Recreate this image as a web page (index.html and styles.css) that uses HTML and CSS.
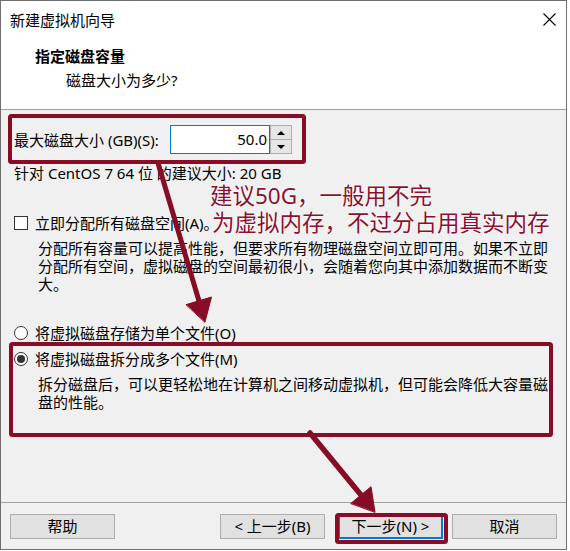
FILE: index.html
```html
<!DOCTYPE html>
<html lang="zh-CN">
<head>
<meta charset="utf-8">
<title>新建虚拟机向导</title>
<link rel="stylesheet" href="styles.css">
</head>
<body>
<div class="window">
  <div class="top">
    <div class="titlebar">
      <span class="title">新建虚拟机向导</span>
      <svg class="close" width="13" height="13" viewBox="0 0 13 13"><path d="M0.5 0.5 L12.5 12.5 M12.5 0.5 L0.5 12.5" stroke="#000" stroke-width="1.1" fill="none"/></svg>
    </div>
    <div class="header">
      <div class="h1">指定磁盘容量</div>
      <div class="sub">磁盘大小为多少?</div>
    </div>
  </div>
  <div class="body">
    <div class="size-row">
      <span class="label">最大磁盘大小 (GB)(S):</span>
      <div class="spin">
        <div class="field">50.0</div>
        <div class="arrows">
          <div class="ab"><span class="tri up"></span></div>
          <div class="ab"><span class="tri down"></span></div>
        </div>
      </div>
    </div>
    <div class="rec">针对 CentOS 7 64 位 的建议大小: 20 GB</div>
    <div class="opt check-row"><span class="checkbox"></span><span>立即分配所有磁盘空间(A)。</span></div>
    <p class="desc">分配所有容量可以提高性能，但要求所有物理磁盘空间立即可用。如果不立即分配所有空间，虚拟磁盘的空间最初很小，会随着您向其中添加数据而不断变大。</p>
    <div class="opt r1"><span class="radio"></span><span>将虚拟磁盘存储为单个文件(O)</span></div>
    <div class="opt r2"><span class="radio on"></span><span>将虚拟磁盘拆分成多个文件(M)</span></div>
    <p class="desc">拆分磁盘后，可以更轻松地在计算机之间移动虚拟机，但可能会降低大容量磁盘的性能。</p>
  </div>
  <div class="footer">
    <button class="btn">帮助</button>
    <span class="fill"></span>
    <button class="btn back">&lt; 上一步(B)</button>
    <button class="btn next">下一步(N) &gt;</button>
    <button class="btn">取消</button>
  </div>
</div>

<svg class="marks" width="570" height="551" viewBox="0 0 570 551">
  <g fill="none" stroke="#870c25" stroke-width="4">
    <rect x="10" y="116" width="294" height="46" rx="1.5"/>
    <rect x="11" y="344" width="540" height="91" rx="1.5"/>
    <rect x="337" y="515" width="109" height="27" rx="1.5"/>
  </g>
  <g stroke="#870c25" stroke-linecap="round" fill="#870c25">
    <line x1="158" y1="163" x2="199" y2="301" stroke-width="5"/>
    <polygon points="205,322 211.5,297 186.3,304.6" stroke-width="1"/>
    <line x1="310" y1="433" x2="361" y2="495" stroke-width="5.5"/>
    <polygon points="375,512 371,486.7 351,503.3" stroke-width="1"/>
  </g>
</svg>
<div class="note">
  <div class="n1">建议50G，一般用不完</div>
  <div class="n2">为虚拟内存，不过分占用真实内存</div>
</div>
</body>
</html>
```
FILE: styles.css
```css
* {
  box-sizing: border-box;
  margin: 0;
  padding: 0;
}

html, body {
  width: 570px;
  height: 551px;
  background: #ffffff;
  overflow: hidden;
}

body {
  position: relative;
  font-family: "Noto Sans", "Noto Sans CJK SC", sans-serif;
  font-size: 15px;
  color: #000;
}

.window {
  width: 567px;
  height: 550px;
  border: 1px solid #6f6f6f;
  background: #f0f0f0;
  display: flex;
  flex-direction: column;
}

.top {
  flex: none;
  height: 109px;
  background: #ffffff;
  border-bottom: 1px solid #a0a0a0;
}

.titlebar {
  height: 37px;
  display: flex;
  align-items: center;
  justify-content: space-between;
  padding: 0 10px 0 9px;
}

.title {
  line-height: 18px;
}

.close {
  display: block;
}

.header {
  padding: 9px 0 0 34px;
}

.h1 {
  font-weight: bold;
  line-height: 18px;
}

.sub {
  margin-top: 6px;
  padding-left: 31px;
  line-height: 18px;
}

.body {
  flex: 1;
  padding: 15px 0 0 13px;
}

.size-row {
  display: flex;
  align-items: center;
  height: 29px;
}

.label {
  width: 156px;
  line-height: 18px;
}

.spin {
  display: flex;
  height: 29px;
}

.field {
  width: 100px;
  height: 29px;
  background: #fff;
  border: 1px solid #0078d7;
  text-align: right;
  padding-right: 2px;
  line-height: 27px;
}

.arrows {
  width: 22px;
  height: 29px;
  border: 1px solid #adadad;
  display: flex;
  flex-direction: column;
  background: #e6e6e6;
}

.ab {
  flex: 1;
  display: flex;
  align-items: center;
  justify-content: center;
}

.ab + .ab {
  border-top: 1px solid #adadad;
}

.tri {
  width: 0;
  height: 0;
  border-left: 4px solid transparent;
  border-right: 4px solid transparent;
}

.tri.up {
  border-bottom: 4px solid #000;
}

.tri.down {
  border-top: 4px solid #000;
}

.rec {
  margin-top: 10px;
  line-height: 18px;
}

.opt {
  display: flex;
  align-items: center;
  height: 18px;
  line-height: 18px;
}

.check-row {
  margin-top: 32px;
}

.checkbox {
  width: 14px;
  height: 14px;
  border: 1px solid #333;
  background: #fff;
  margin-right: 7px;
}

.desc {
  margin-top: 7px;
  padding-left: 24px;
  width: 540px;
  line-height: 18px;
}

.r1 {
  margin-top: 31px;
}

.r2 {
  margin-top: 8px;
}

.radio {
  width: 14px;
  height: 14px;
  border-radius: 50%;
  border: 1px solid #333;
  background: #fff;
  margin-right: 7px;
  display: flex;
  align-items: center;
  justify-content: center;
}

.radio.on::after {
  content: "";
  width: 8px;
  height: 8px;
  border-radius: 50%;
  background: #333;
}

.footer {
  flex: none;
  height: 47px;
  border-top: 1px solid #a0a0a0;
  padding: 11px 9px 0 9px;
  display: flex;
  align-items: flex-start;
}

.fill {
  flex: 1;
}

.btn {
  width: 105px;
  height: 25px;
  background: #e1e1e1;
  border: 1px solid #adadad;
  font-family: inherit;
  font-size: 15px;
  line-height: 23px;
  color: #000;
  text-align: center;
}

.back {
  margin-right: 13px;
}

.next {
  margin-right: 9px;
  border-color: #0078d7;
  box-shadow: inset 0 0 0 1px #0078d7;
}

.marks {
  position: absolute;
  left: 0;
  top: 0;
}

.note {
  position: absolute;
  left: 210px;
  top: 182px;
  font-family: "Noto Sans", "Noto Sans CJK SC", sans-serif;
  font-size: 22.5px;
  line-height: 27px;
  color: #8a1030;
  text-shadow: 0 0 2px #fff, 0 0 2px #fff, 0 0 1px #fff;
  white-space: nowrap;
}

.n2 {
  margin-left: 2px;
}
```
